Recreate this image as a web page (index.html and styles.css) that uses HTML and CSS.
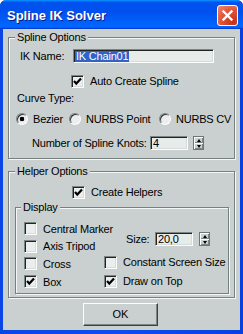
FILE: index.html
```html
<!DOCTYPE html>
<html lang="en">
    <head>
        <meta charset="UTF-8">
        <title>Spline IK Solver</title>
        <link rel="stylesheet" href="styles.css">
    </head>
    <body>
        <div class="window">
            <div class="titlebar">
                <span class="title">Spline IK Solver</span>
                <span class="close">
                    <svg width="13" height="13" viewBox="0 0 13 13"><path d="M2.5 2.5 L10.5 10.5 M10.5 2.5 L2.5 10.5" stroke="#fff" stroke-width="2.4" stroke-linecap="square"/></svg>
                </span>
            </div>
            <div class="client">
                <fieldset class="group spline">
                    <legend>Spline Options</legend>
                    <div class="row name-row">
                        <span class="label">IK Name:</span>
                        <span class="field name-field"><span class="selected">IK Chain01</span></span>
                    </div>
                    <div class="row auto-row">
                        <span class="check on"><svg width="11" height="11" viewBox="0 0 11 11"><path d="M2 5 L4.3 7.6 L9 2.6" fill="none" stroke="#000" stroke-width="2.2"/></svg></span>Auto Create Spline
                    </div>
                    <div class="row curve-row">Curve Type:</div>
                    <div class="row radios">
                        <span class="opt bezier"><span class="radio on"></span>Bezier</span>
                        <span class="opt point"><span class="radio"></span>NURBS Point</span>
                        <span class="opt"><span class="radio"></span>NURBS CV</span>
                    </div>
                    <div class="row knots-row">
                        <span class="knots-label">Number of Spline Knots:</span>
                        <span class="field num-field">4</span>
                        <span class="spin"><span class="up"></span><span class="dn"></span></span>
                    </div>
                </fieldset>

                <fieldset class="group helper">
                    <legend>Helper Options</legend>
                    <div class="row create-row">
                        <span class="check on"><svg width="11" height="11" viewBox="0 0 11 11"><path d="M2 5 L4.3 7.6 L9 2.6" fill="none" stroke="#000" stroke-width="2.2"/></svg></span>Create Helpers
                    </div>
                    <fieldset class="group display">
                        <legend>Display</legend>
                        <div class="display-cols">
                            <div class="col col-left">
                                <div class="row drow"><span class="check"></span>Central Marker</div>
                                <div class="row drow"><span class="check"></span>Axis Tripod</div>
                                <div class="row drow"><span class="check"></span>Cross</div>
                                <div class="row drow"><span class="check on"><svg width="11" height="11" viewBox="0 0 11 11"><path d="M2 5 L4.3 7.6 L9 2.6" fill="none" stroke="#000" stroke-width="2.2"/></svg></span>Box</div>
                            </div>
                            <div class="col col-right">
                                <div class="row size-row">
                                    <span class="size-label">Size:</span>
                                    <span class="field size-field">20,0</span>
                                    <span class="spin"><span class="up"></span><span class="dn"></span></span>
                                </div>
                                <div class="row screen-row"><span class="check"></span>Constant Screen Size</div>
                                <div class="row top-row"><span class="check on"><svg width="11" height="11" viewBox="0 0 11 11"><path d="M2 5 L4.3 7.6 L9 2.6" fill="none" stroke="#000" stroke-width="2.2"/></svg></span>Draw on Top</div>
                            </div>
                        </div>
                    </fieldset>
                </fieldset>

                <div class="ok">OK</div>
            </div>
        </div>
    </body>
</html>
```

FILE: styles.css
```css
:root{
    box-sizing: border-box;
    font-family: "Liberation Sans", Arial, sans-serif;
    font-size: 11px;
}
*{
    box-sizing: inherit;
}
body{
    margin: 0;
    background: #fff;
}

/* window frame */
.window{
    width: 243px;
    height: 334px;
    display: flex;
    flex-direction: column;
    background: linear-gradient(to right, #0a46e6, #0a4ef0 50%, #0840e0);
    border-radius: 6px 6px 0 0;
    overflow: hidden;
}
.titlebar{
    flex: none;
    height: 29px;
    display: flex;
    align-items: center;
    justify-content: space-between;
    padding: 2px 5px 0 7px;
    background: linear-gradient(180deg, #0997ff, #0053ee 8%, #0050ee 40%, #0066ff 88%, #0066ff 93%, #005bff 95%, #003dd7 96%, #003dd7);
}
.title{
    color: #fff;
    font-weight: bold;
    font-size: 13px;
    text-shadow: 1px 1px #0a1a8a;
}
.close{
    width: 21px;
    height: 21px;
    display: flex;
    align-items: center;
    justify-content: center;
    border: 1px solid #fff;
    border-radius: 3px;
    background: radial-gradient(circle at 80% 85%, #c2321a, #e0553a 55%, #f28a6e);
}

.client{
    flex: 1;
    margin: 0 3px 4px 3px;
    padding: 2px 5px 0;
    background: #c9d0cf;
    color: #000;
    letter-spacing: -0.2px;
}

/* group boxes */
.group{
    margin: 0;
    padding: 0;
    min-width: 0;
    border: 1px solid #76807f;
    box-shadow: inset 1px 1px #f4f7f6, 1px 1px #f4f7f6;
}
.group legend{
    margin-left: 6px;
    padding: 0 2px;
    line-height: 13px;
    background: #c9d0cf;
}
.spline{
    padding-bottom: 8px;
}
.helper{
    margin-top: 6px;
    padding-bottom: 3px;
}
.display{
    margin: 2px 5px 0 6px;
    padding-bottom: 2.6px;
}
.display legend{
    margin-left: 5px;
}

/* rows */
.row{
    display: flex;
    align-items: center;
    height: 14px;
    white-space: nowrap;
}
.name-row{
    margin-top: 5px;
    padding-left: 11px;
}
.name-row .label{
    width: 53px;
}
.auto-row{
    margin-top: 11px;
    padding-left: 62px;
}
.curve-row{
    margin-top: 3px;
    padding-left: 8px;
}
.radios{
    margin-top: 7px;
    padding-left: 7px;
}
.opt{
    display: flex;
    align-items: center;
}
.bezier{
    width: 53px;
}
.point{
    width: 90px;
}
.knots-row{
    margin-top: 10px;
    padding-left: 23px;
}
.knots-label{
    width: 118px;
}
.create-row{
    margin-top: 7px;
    padding-left: 63px;
}

.display-cols{
    display: flex;
    padding-top: 6px;
}
.col-left{
    width: 88px;
    padding-left: 8px;
}
.drow{
    height: 17.6px;
}
.col-right{
    display: flex;
    flex-direction: column;
}
.size-row{
    margin-top: 12px;
    padding-left: 22px;
}
.size-label{
    width: 29px;
}
.screen-row{
    margin-top: 9px;
}
.top-row{
    margin-top: 5px;
}

/* controls */
.field{
    height: 14px;
    display: flex;
    align-items: center;
    padding: 0 2px;
    background: #e7ebe9;
    border: 1px solid;
    border-color: #7b8584 #fcfefd #fcfefd #7b8584;
    box-shadow: inset 1px 1px #202524, inset -1px -1px #d6dcda;
}
.name-field{
    width: 141px;
    padding-left: 1px;
}
.selected{
    background: #3063c8;
    color: #fff;
    padding: 0 1px;
    line-height: 11px;
}
.num-field{
    width: 38px;
}
.size-field{
    width: 38px;
}

.check{
    flex: none;
    width: 13px;
    height: 13px;
    margin-right: 6px;
    padding: 1px;
    background: #eceeed;
    border: 1px solid;
    border-color: #7b8584 #fcfefd #fcfefd #7b8584;
    box-shadow: inset 1px 1px #202524, inset -1px -1px #d6dcda;
}
.check svg{
    display: block;
    margin: -1px 0 0 -1px;
}

.radio{
    flex: none;
    width: 12px;
    height: 12px;
    margin-right: 5px;
    border-radius: 50%;
    border: 1px solid;
    border-color: #7b8584 #fcfefd #fcfefd #7b8584;
    box-shadow: inset 1px 1px #303535;
    background: #eceeed;
}
.radio.on{
    background: radial-gradient(circle, #000 0 2px, #eceeed 2.6px);
}

.spin{
    flex: none;
    display: flex;
    flex-direction: column;
    width: 11px;
    height: 14px;
    margin-left: 5px;
    border: 1px solid #6c7675;
}
.size-row .spin{
    margin-left: 6px;
}
.spin span{
    flex: 1;
    display: flex;
    align-items: center;
    justify-content: center;
    background: #c9d0cf;
    box-shadow: inset 1px 1px #fcfefd, inset -1px -1px #7b8584;
}
.spin .up::after{
    content: "";
    border-left: 2.5px solid transparent;
    border-right: 2.5px solid transparent;
    border-bottom: 3px solid #000;
}
.spin .dn::after{
    content: "";
    border-left: 2.5px solid transparent;
    border-right: 2.5px solid transparent;
    border-top: 3px solid #000;
}

.ok{
    display: flex;
    align-items: center;
    justify-content: center;
    width: 75px;
    height: 23px;
    margin: 5px 0 0 75px;
    background: #c9d0cf;
    border: 1px solid;
    border-color: #fcfefd #3c4242 #3c4242 #fcfefd;
    box-shadow: inset -1px -1px #7b8584;
    letter-spacing: 0;
}
```
